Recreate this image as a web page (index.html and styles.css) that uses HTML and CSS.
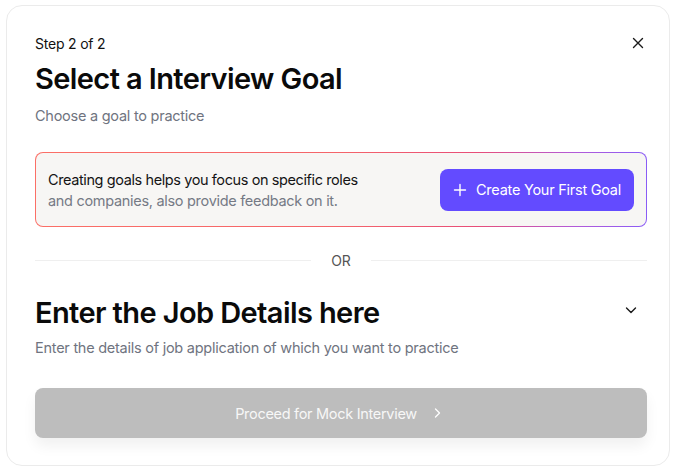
FILE: index.html
```html
<!DOCTYPE html>
<html>
<head>
<meta charset="utf-8">
<link rel="stylesheet" href="styles.css">
</head>
<body>
<div class="card">
  <div class="head">
    <div class="step">Step 2 of 2</div>
    <button class="close" aria-label="Close">
      <svg width="12" height="12" viewBox="0 0 12 12"><path d="M1.5 1.5 L10.5 10.5 M10.5 1.5 L1.5 10.5" stroke="#1a1a1a" stroke-width="1.4" stroke-linecap="round"/></svg>
    </button>
  </div>
  <h1 class="title">Select a Interview Goal</h1>
  <p class="sub">Choose a goal to practice</p>

  <div class="info">
    <p class="info-text"><span class="dark">Creating goals helps you focus on specific roles</span><br><span class="muted">and companies, also provide feedback on it.</span></p>
    <button class="primary">
      <svg width="14" height="14" viewBox="0 0 14 14"><path d="M7 1.5 V12.5 M1.5 7 H12.5" stroke="#fff" stroke-width="1.4" stroke-linecap="round"/></svg>
      <span>Create Your First Goal</span>
    </button>
  </div>

  <div class="or"><span class="line"></span><span class="or-text">OR</span><span class="line"></span></div>

  <div class="job-head">
    <h2 class="title">Enter the Job Details here</h2>
    <svg class="chev" width="14" height="14" viewBox="0 0 14 14"><path d="M2.5 5 L7 9.5 L11.5 5" fill="none" stroke="#1a1a1a" stroke-width="1.4" stroke-linecap="round" stroke-linejoin="round"/></svg>
  </div>
  <p class="sub">Enter the details of job application of which you want to practice</p>

  <button class="proceed">
    <span>Proceed for Mock Interview</span>
    <svg width="12" height="12" viewBox="0 0 12 12"><path d="M4.5 2 L8.5 6 L4.5 10" fill="none" stroke="#fff" stroke-width="1.3" stroke-linecap="round" stroke-linejoin="round"/></svg>
  </button>
</div>
</body>
</html>
```
FILE: styles.css
```css
* { box-sizing: border-box; }
html, body { margin: 0; padding: 0; background: #ffffff; }
body {
  font-family: "Inter", "DejaVu Sans", sans-serif;
  color: #111111;
  padding: 5px 6px 0 6px;
}
.card {
  width: 664px;
  height: 461px;
  border: 1px solid #ebebeb;
  border-radius: 16px;
  background: #fff;
  padding: 28px 22px 0 28px;
}
.head {
  display: flex;
  justify-content: space-between;
  align-items: center;
  height: 18px;
}
.step { font-size: 14px; letter-spacing: -0.2px; color: #111; }
.close {
  border: 0; background: none; padding: 0; margin-right: 3px;
  width: 12px; height: 12px; display: flex;
}
.title {
  margin: 0;
  font-size: 29px;
  font-weight: 600;
  letter-spacing: -0.6px;
  color: #0a0a0a;
  line-height: 34px;
}
.head + .title { margin-top: 10px; }
.sub {
  margin: 10px 0 0 0;
  font-size: 14.5px;
  color: #6f7480;
  letter-spacing: -0.25px;
  line-height: 20px;
}
.info {
  margin-top: 26px;
  height: 75px;
  border: 1px solid transparent;
  border-radius: 8px;
  background:
    linear-gradient(#f7f6f4, #f7f6f4) padding-box,
    linear-gradient(90deg, #fb6f66 0%, #f4646a 50%, #e84d78 72%, #b35ad8 88%, #8a5cf6 100%) border-box;
  display: flex;
  align-items: center;
  justify-content: space-between;
  padding: 0 12px 0 12px;
}
.info-text {
  margin: 0;
  font-size: 14.5px;
  line-height: 21px;
}
.dark { color: #141414; letter-spacing: -0.4px; }
.muted { color: #757a85; letter-spacing: -0.3px; }
.primary {
  height: 42px;
  width: 194px;
  border: 0;
  border-radius: 8px;
  background: #634bff;
  color: #fff;
  font-family: inherit;
  font-size: 14.5px;
  letter-spacing: -0.25px;
  display: flex;
  align-items: center;
  justify-content: center;
  gap: 9px;
  padding: 0;
}
.or {
  margin-top: 25px;
  display: flex;
  align-items: center;
  gap: 20px;
  height: 16px;
}
.line { flex: 1; height: 1px; background: #efefef; }
.or-text { font-size: 14px; color: #555; letter-spacing: -0.2px; }
.job-head {
  margin-top: 28px;
  display: flex;
  align-items: center;
  justify-content: space-between;
}
.chev { margin-right: 9px; margin-top: -6px; }
.job-head + .sub { margin-top: 8px; }
.proceed {
  margin-top: 30px;
  width: 100%;
  height: 50px;
  border: 0;
  border-radius: 8px;
  background: #bdbdbd;
  color: #f7f7f7;
  font-family: inherit;
  font-size: 14.5px;
  letter-spacing: -0.3px;
  display: flex;
  align-items: center;
  justify-content: center;
  gap: 14px;
  padding: 0 4px 0 0;
  box-shadow: 0 8px 14px rgba(0,0,0,0.06);
}
```
